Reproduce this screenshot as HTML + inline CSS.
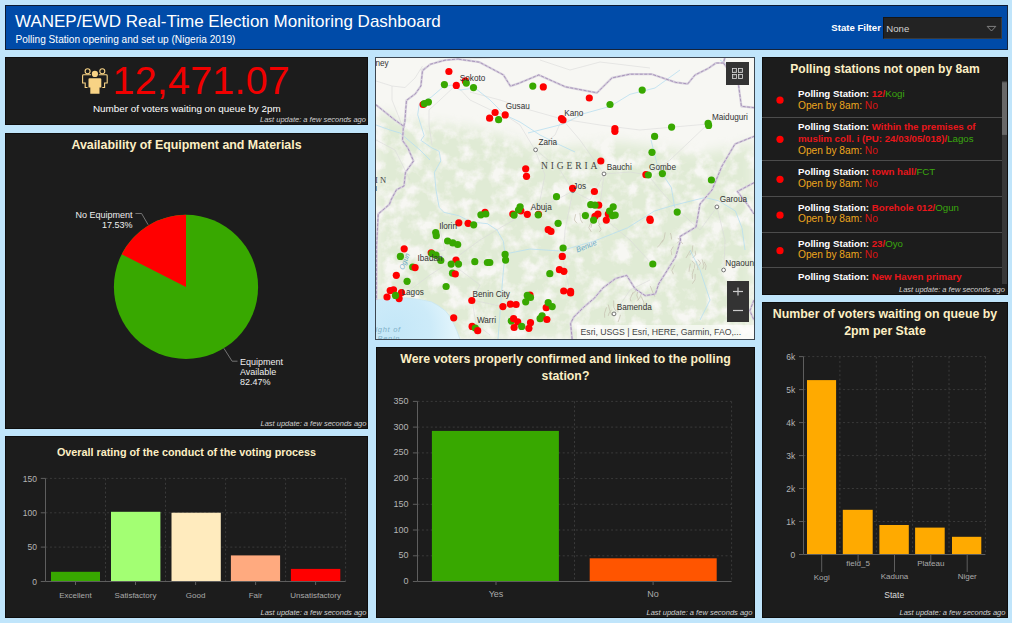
<!DOCTYPE html>
<html><head><meta charset="utf-8">
<style>
html,body{margin:0;padding:0;}
body{width:1012px;height:623px;background:#c0e5fb;position:relative;overflow:hidden;font-family:"Liberation Sans",sans-serif;}
.p{position:absolute;background:#1c1c1c;box-sizing:border-box;border:1px solid #0e0e0e;}
.t{position:absolute;white-space:nowrap;line-height:1;}
.ttl{color:#fdefc4;font-weight:bold;}
.lu{position:absolute;white-space:nowrap;font-style:italic;color:#d0d0d0;font-size:7.5px;line-height:1;}
.ax{color:#b4b4b4;font-size:8.5px;}
.ax8{font-size:8px;color:#aaa;}
.ml{color:#333;font-size:8.2px;}
svg{position:absolute;left:0;top:0;overflow:visible;}
</style></head><body>
<!-- header -->
<div style="position:absolute;left:5px;top:5px;width:1003px;height:45px;background:#004ba8;box-sizing:border-box;border:1px solid #15233a;border-top-color:#0b1a33;border-left-color:#0b1a33;"></div>
<div class="t" style="left:15px;top:13px;font-size:17px;color:#fff;">WANEP/EWD Real-Time Election Monitoring Dashboard</div>
<div class="t" style="left:15.5px;top:35px;font-size:10.1px;color:#fff;">Polling Station opening and set up (Nigeria 2019)</div>
<div class="t" style="left:831.3px;top:23.3px;font-size:9.6px;color:#fff;font-weight:bold;">State Filter</div>
<div style="position:absolute;left:883px;top:17px;width:119px;height:22px;background:#232323;box-sizing:border-box;border:1px solid #151515;border-right-color:#3a3a3a;border-bottom-color:#3a3a3a;"></div>
<svg width="1012" height="623"><path d="M987.2,26.4 L995.8,26.4 L991.5,31 Z" fill="none" stroke="#8a8a8a" stroke-width="0.9"/></svg>
<div class="t" style="left:886.3px;top:23.8px;font-size:9.6px;color:#d2d2d2;">None</div>

<!-- panels -->
<div class="p" style="left:5px;top:57px;width:363px;height:68px;"></div>
<div class="p" style="left:5px;top:133px;width:363px;height:296px;"></div>
<div class="p" style="left:5px;top:436px;width:363px;height:182px;"></div>
<div class="p" style="left:376px;top:347px;width:379px;height:271px;"></div>
<div class="p" style="left:762px;top:57px;width:246px;height:238px;"></div>
<div class="p" style="left:762px;top:302px;width:246px;height:316px;"></div>


<!-- P1 -->
<svg width="1012" height="623" style="left:0;top:0">
<g fill="#f8d385" stroke="none">
<circle cx="94.9" cy="73.9" r="3.1"/>
<path d="M89.5,78.2 L100.3,78.2 Q101.3,78.2 101.3,79.2 L101.3,87.6 L99.5,87.6 L99.5,93.8 L90.3,93.8 L90.3,87.6 L88.5,87.6 L88.5,79.2 Q88.5,78.2 89.5,78.2 Z"/>
</g>
<g fill="none" stroke="#f8d385" stroke-width="1.1">
<circle cx="87.6" cy="71.2" r="2.5"/>
<circle cx="102.3" cy="71.2" r="2.5"/>
<path d="M91,74.8 L83.5,74.8 Q82.6,74.8 82.6,75.7 L82.6,83 L85.2,83 L85.2,87.5 L87.5,87.5"/>
<path d="M98.8,74.8 L106.3,74.8 Q107.2,74.8 107.2,75.7 L107.2,83 L104.6,83 L104.6,87.5 L102.3,87.5"/>
</g>
</svg>
<div class="t" style="left:112.5px;top:60.8px;font-size:39.5px;letter-spacing:0.2px;color:#f00000;">12,471.07</div>
<div class="t" style="left:93px;top:104px;font-size:9.85px;color:#fff;">Number of voters waiting on queue by 2pm</div>
<div class="lu" style="left:260px;top:116px;">Last update: a few seconds ago</div>


<!-- P2 -->
<div class="t ttl" style="left:5px;width:363px;text-align:center;top:139px;font-size:12.4px;">Availability of Equipment and Materials</div>
<svg width="1012" height="623">
<circle cx="186" cy="286.9" r="72.1" fill="#38a800"/>
<path d="M186,286.9 L186,214.8 A72.1,72.1 0 0,0 121.7,254.3 Z" fill="#ff0000"/>
<polyline points="135.4,213.5 141.6,213.5 148.1,224.7" fill="none" stroke="#8a8a8a" stroke-width="0.8"/>
<polyline points="223.9,348.3 232.1,361.2 237.5,361.2" fill="none" stroke="#8a8a8a" stroke-width="0.8"/>
</svg>
<div class="t" style="left:32.6px;width:100px;text-align:right;top:209.5px;font-size:9px;color:#eee;line-height:10px;">No Equipment<br>17.53%</div>
<div class="t" style="left:240px;top:357px;font-size:9px;color:#eee;line-height:10.15px;">Equipment<br>Available<br>82.47%</div>
<div class="lu" style="left:260.5px;top:419.5px;">Last update: a few seconds ago</div>


<!-- P3 -->
<div class="t ttl" style="left:5px;width:363px;text-align:center;top:447px;font-size:10.8px;">Overall rating of the conduct of the voting process</div>
<svg width="1012" height="623">
<line x1="45.5" y1="478.4" x2="345.6" y2="478.4" stroke="#3a3a3a" stroke-width="1" stroke-dasharray="2,2.4"/>
<line x1="45.5" y1="512.8" x2="345.6" y2="512.8" stroke="#3a3a3a" stroke-width="1" stroke-dasharray="2,2.4"/>
<line x1="45.5" y1="547.1" x2="345.6" y2="547.1" stroke="#3a3a3a" stroke-width="1" stroke-dasharray="2,2.4"/>
<line x1="105.5" y1="478.4" x2="105.5" y2="581.5" stroke="#3a3a3a" stroke-width="1" stroke-dasharray="2,2.4"/>
<line x1="165.5" y1="478.4" x2="165.5" y2="581.5" stroke="#3a3a3a" stroke-width="1" stroke-dasharray="2,2.4"/>
<line x1="225.6" y1="478.4" x2="225.6" y2="581.5" stroke="#3a3a3a" stroke-width="1" stroke-dasharray="2,2.4"/>
<line x1="285.6" y1="478.4" x2="285.6" y2="581.5" stroke="#3a3a3a" stroke-width="1" stroke-dasharray="2,2.4"/>
<line x1="345.6" y1="478.4" x2="345.6" y2="581.5" stroke="#3a3a3a" stroke-width="1" stroke-dasharray="2,2.4"/>
<rect x="51" y="571.8" width="49.0" height="9.4" fill="#38a800"/>
<rect x="111" y="511.8" width="49.4" height="69.4" fill="#a3ff73"/>
<rect x="171.5" y="512.7" width="49.3" height="68.5" fill="#ffebbe"/>
<rect x="230.9" y="555.4" width="49.2" height="25.8" fill="#ffaa7f"/>
<rect x="290.9" y="568.9" width="49.4" height="12.3" fill="#ff0000"/>
<line x1="45.5" y1="478.4" x2="45.5" y2="581.5" stroke="#5e5e5e" stroke-width="1"/>
<line x1="45.5" y1="581.5" x2="345.6" y2="581.5" stroke="#5e5e5e" stroke-width="1"/>
<line x1="40.8" y1="478.4" x2="45.5" y2="478.4" stroke="#5e5e5e" stroke-width="1"/>
<line x1="40.8" y1="512.8" x2="45.5" y2="512.8" stroke="#5e5e5e" stroke-width="1"/>
<line x1="40.8" y1="547.1" x2="45.5" y2="547.1" stroke="#5e5e5e" stroke-width="1"/>
<line x1="40.8" y1="581.5" x2="45.5" y2="581.5" stroke="#5e5e5e" stroke-width="1"/>
<line x1="75.5" y1="581.5" x2="75.5" y2="585" stroke="#5e5e5e" stroke-width="1"/>
<line x1="135.5" y1="581.5" x2="135.5" y2="585" stroke="#5e5e5e" stroke-width="1"/>
<line x1="195.6" y1="581.5" x2="195.6" y2="585" stroke="#5e5e5e" stroke-width="1"/>
<line x1="255.6" y1="581.5" x2="255.6" y2="585" stroke="#5e5e5e" stroke-width="1"/>
<line x1="315.6" y1="581.5" x2="315.6" y2="585" stroke="#5e5e5e" stroke-width="1"/>
</svg>
<div class="t ax" style="left:0;width:37px;text-align:right;top:474.7px;">150</div>
<div class="t ax" style="left:0;width:37px;text-align:right;top:509.1px;">100</div>
<div class="t ax" style="left:0;width:37px;text-align:right;top:543.4px;">50</div>
<div class="t ax" style="left:0;width:37px;text-align:right;top:577.8px;">0</div>
<div class="t ax" style="left:35.5px;width:80px;text-align:center;top:591.6px;font-size:8px;color:#aaa;">Excellent</div>
<div class="t ax" style="left:95.5px;width:80px;text-align:center;top:591.6px;font-size:8px;color:#aaa;">Satisfactory</div>
<div class="t ax" style="left:155.6px;width:80px;text-align:center;top:591.6px;font-size:8px;color:#aaa;">Good</div>
<div class="t ax" style="left:215.6px;width:80px;text-align:center;top:591.6px;font-size:8px;color:#aaa;">Fair</div>
<div class="t ax" style="left:275.6px;width:80px;text-align:center;top:591.6px;font-size:8px;color:#aaa;">Unsatisfactory</div>
<div class="lu" style="left:260.5px;top:609px;">Last update: a few seconds ago</div>


<!-- P5 -->
<div class="t ttl" style="left:376px;width:379px;text-align:center;top:351.35px;font-size:12.3px;line-height:16.2px;">Were voters properly confirmed and linked to the polling<br>station?</div>
<svg width="1012" height="623">
<line x1="417.5" y1="555.8" x2="731.6" y2="555.8" stroke="#3a3a3a" stroke-width="1" stroke-dasharray="2,2.4"/>
<line x1="417.5" y1="530.0" x2="731.6" y2="530.0" stroke="#3a3a3a" stroke-width="1" stroke-dasharray="2,2.4"/>
<line x1="417.5" y1="504.3" x2="731.6" y2="504.3" stroke="#3a3a3a" stroke-width="1" stroke-dasharray="2,2.4"/>
<line x1="417.5" y1="478.6" x2="731.6" y2="478.6" stroke="#3a3a3a" stroke-width="1" stroke-dasharray="2,2.4"/>
<line x1="417.5" y1="452.9" x2="731.6" y2="452.9" stroke="#3a3a3a" stroke-width="1" stroke-dasharray="2,2.4"/>
<line x1="417.5" y1="427.1" x2="731.6" y2="427.1" stroke="#3a3a3a" stroke-width="1" stroke-dasharray="2,2.4"/>
<line x1="417.5" y1="401.4" x2="731.6" y2="401.4" stroke="#3a3a3a" stroke-width="1" stroke-dasharray="2,2.4"/>
<line x1="574.5" y1="401.4" x2="574.5" y2="581.5" stroke="#3a3a3a" stroke-width="1" stroke-dasharray="2,2.4"/>
<line x1="731.6" y1="401.4" x2="731.6" y2="581.5" stroke="#3a3a3a" stroke-width="1" stroke-dasharray="2,2.4"/>
<rect x="431.9" y="430.9" width="127" height="150.4" fill="#38a800"/>
<rect x="589.7" y="558.3" width="127" height="23" fill="#ff5500"/>
<line x1="417.5" y1="401.4" x2="417.5" y2="581.5" stroke="#5e5e5e" stroke-width="1"/>
<line x1="417.5" y1="581.5" x2="731.6" y2="581.5" stroke="#5e5e5e" stroke-width="1"/>
<line x1="412.9" y1="581.5" x2="417.5" y2="581.5" stroke="#5e5e5e" stroke-width="1"/>
<line x1="412.9" y1="555.8" x2="417.5" y2="555.8" stroke="#5e5e5e" stroke-width="1"/>
<line x1="412.9" y1="530.0" x2="417.5" y2="530.0" stroke="#5e5e5e" stroke-width="1"/>
<line x1="412.9" y1="504.3" x2="417.5" y2="504.3" stroke="#5e5e5e" stroke-width="1"/>
<line x1="412.9" y1="478.6" x2="417.5" y2="478.6" stroke="#5e5e5e" stroke-width="1"/>
<line x1="412.9" y1="452.9" x2="417.5" y2="452.9" stroke="#5e5e5e" stroke-width="1"/>
<line x1="412.9" y1="427.1" x2="417.5" y2="427.1" stroke="#5e5e5e" stroke-width="1"/>
<line x1="412.9" y1="401.4" x2="417.5" y2="401.4" stroke="#5e5e5e" stroke-width="1"/>
<line x1="496.0" y1="581.5" x2="496.0" y2="585" stroke="#5e5e5e" stroke-width="1"/>
<line x1="653.1" y1="581.5" x2="653.1" y2="585" stroke="#5e5e5e" stroke-width="1"/>
</svg>
<div class="t ax" style="left:368px;width:40.5px;text-align:right;top:577.0px;font-size:9px;">0</div>
<div class="t ax" style="left:368px;width:40.5px;text-align:right;top:551.3px;font-size:9px;">50</div>
<div class="t ax" style="left:368px;width:40.5px;text-align:right;top:525.5px;font-size:9px;">100</div>
<div class="t ax" style="left:368px;width:40.5px;text-align:right;top:499.8px;font-size:9px;">150</div>
<div class="t ax" style="left:368px;width:40.5px;text-align:right;top:474.1px;font-size:9px;">200</div>
<div class="t ax" style="left:368px;width:40.5px;text-align:right;top:448.4px;font-size:9px;">250</div>
<div class="t ax" style="left:368px;width:40.5px;text-align:right;top:422.6px;font-size:9px;">300</div>
<div class="t ax" style="left:368px;width:40.5px;text-align:right;top:396.9px;font-size:9px;">350</div>
<div class="t ax" style="left:456.0px;width:80px;text-align:center;top:590px;font-size:9px;color:#aaa;">Yes</div>
<div class="t ax" style="left:613.1px;width:80px;text-align:center;top:590px;font-size:9px;color:#aaa;">No</div>
<div class="lu" style="left:646.5px;top:609px;">Last update: a few seconds ago</div>


<!-- P6 -->
<div class="t ttl" style="left:762px;width:246px;text-align:center;top:63px;font-size:12.1px;">Polling stations not open by 8am</div>
<div style="position:absolute;left:762px;top:81px;width:240px;height:203px;overflow:hidden;">
<div class="t" style="left:36px;top:7.79px;font-size:9.7px;"><b style="color:#fff">Polling Station: </b><b style="color:#e8161b">12/</b><span style="color:#3aa70e">Kogi</span></div>
<div class="t" style="left:36px;top:19.69px;font-size:9.7px;"><span style="color:#eda61e;font-size:10.2px">Open by 8am: </span><span style="color:#d81414;font-size:10.2px">No</span></div>
<div class="t" style="left:36px;top:41.29px;font-size:9.7px;"><b style="color:#fff">Polling Station: </b><b style="color:#e8161b">Within the premises of</b></div>
<div class="t" style="left:36px;top:52.99px;font-size:9.7px;"><b style="color:#e8161b">muslim coll. i (PU: 24/03/05/018)/</b><span style="color:#3aa70e">Lagos</span></div>
<div class="t" style="left:36px;top:64.89px;font-size:9.7px;"><span style="color:#eda61e;font-size:10.2px">Open by 8am: </span><span style="color:#d81414;font-size:10.2px">No</span></div>
<div class="t" style="left:36px;top:86.39px;font-size:9.7px;"><b style="color:#fff">Polling Station: </b><b style="color:#e8161b">town hall/</b><span style="color:#3aa70e">FCT</span></div>
<div class="t" style="left:36px;top:98.09px;font-size:9.7px;"><span style="color:#eda61e;font-size:10.2px">Open by 8am: </span><span style="color:#d81414;font-size:10.2px">No</span></div>
<div class="t" style="left:36px;top:121.79px;font-size:9.7px;"><b style="color:#fff">Polling Station: </b><b style="color:#e8161b">Borehole 012/</b><span style="color:#3aa70e">Ogun</span></div>
<div class="t" style="left:36px;top:133.49px;font-size:9.7px;"><span style="color:#eda61e;font-size:10.2px">Open by 8am: </span><span style="color:#d81414;font-size:10.2px">No</span></div>
<div class="t" style="left:36px;top:157.59px;font-size:9.7px;"><b style="color:#fff">Polling Station: </b><b style="color:#e8161b">23/</b><span style="color:#3aa70e">Oyo</span></div>
<div class="t" style="left:36px;top:169.19px;font-size:9.7px;"><span style="color:#eda61e;font-size:10.2px">Open by 8am: </span><span style="color:#d81414;font-size:10.2px">No</span></div>
<div class="t" style="left:36px;top:191.09px;font-size:9.7px;"><b style="color:#fff">Polling Station: </b><b style="color:#e8161b">New Haven primary</b></div>
</div>
<svg width="1012" height="623">
<line x1="762" y1="117.5" x2="1002" y2="117.5" stroke="#4c4c4c" stroke-width="1"/>
<line x1="762" y1="160.5" x2="1002" y2="160.5" stroke="#4c4c4c" stroke-width="1"/>
<line x1="762" y1="196.5" x2="1002" y2="196.5" stroke="#4c4c4c" stroke-width="1"/>
<line x1="762" y1="232.5" x2="1002" y2="232.5" stroke="#4c4c4c" stroke-width="1"/>
<line x1="762" y1="267.5" x2="1002" y2="267.5" stroke="#4c4c4c" stroke-width="1"/>
<circle cx="780" cy="100.2" r="3.6" fill="#ff0000"/>
<circle cx="780" cy="139.3" r="3.6" fill="#ff0000"/>
<circle cx="780" cy="179.3" r="3.6" fill="#ff0000"/>
<circle cx="780" cy="215.2" r="3.6" fill="#ff0000"/>
<circle cx="780" cy="250.7" r="3.6" fill="#ff0000"/>
<rect x="1002" y="81" width="5" height="203" fill="#383838"/>
<rect x="1002" y="82.3" width="5" height="52.6" fill="#686868"/>
<rect x="898" y="284" width="109" height="10" fill="#1c1c1c"/>
</svg>
<div class="lu" style="left:899px;top:285.5px;">Last update: a few seconds ago</div>


<!-- P7 -->
<div class="t ttl" style="left:762px;width:246px;text-align:center;top:305.6px;font-size:12.35px;line-height:17.6px;">Number of voters waiting on queue by<br>2pm per State</div>
<svg width="1012" height="623">
<line x1="803.5" y1="521.5" x2="985.4" y2="521.5" stroke="#3a3a3a" stroke-width="1" stroke-dasharray="2,2.4"/>
<line x1="803.5" y1="488.5" x2="985.4" y2="488.5" stroke="#3a3a3a" stroke-width="1" stroke-dasharray="2,2.4"/>
<line x1="803.5" y1="455.6" x2="985.4" y2="455.6" stroke="#3a3a3a" stroke-width="1" stroke-dasharray="2,2.4"/>
<line x1="803.5" y1="422.6" x2="985.4" y2="422.6" stroke="#3a3a3a" stroke-width="1" stroke-dasharray="2,2.4"/>
<line x1="803.5" y1="389.6" x2="985.4" y2="389.6" stroke="#3a3a3a" stroke-width="1" stroke-dasharray="2,2.4"/>
<line x1="803.5" y1="356.6" x2="985.4" y2="356.6" stroke="#3a3a3a" stroke-width="1" stroke-dasharray="2,2.4"/>
<line x1="839.9" y1="356.6" x2="839.9" y2="554.5" stroke="#3a3a3a" stroke-width="1" stroke-dasharray="2,2.4"/>
<line x1="876.3" y1="356.6" x2="876.3" y2="554.5" stroke="#3a3a3a" stroke-width="1" stroke-dasharray="2,2.4"/>
<line x1="912.6" y1="356.6" x2="912.6" y2="554.5" stroke="#3a3a3a" stroke-width="1" stroke-dasharray="2,2.4"/>
<line x1="949.0" y1="356.6" x2="949.0" y2="554.5" stroke="#3a3a3a" stroke-width="1" stroke-dasharray="2,2.4"/>
<line x1="985.4" y1="356.6" x2="985.4" y2="554.5" stroke="#3a3a3a" stroke-width="1" stroke-dasharray="2,2.4"/>
<rect x="807" y="380.1" width="29.1" height="174.2" fill="#ffaa00"/>
<rect x="842.8" y="509.8" width="29.9" height="44.5" fill="#ffaa00"/>
<rect x="879.4" y="525" width="29.4" height="29.3" fill="#ffaa00"/>
<rect x="915.1" y="527.6" width="29.6" height="26.7" fill="#ffaa00"/>
<rect x="952" y="536.8" width="29.3" height="17.5" fill="#ffaa00"/>
<line x1="803.5" y1="356.6" x2="803.5" y2="554.5" stroke="#5e5e5e" stroke-width="1"/>
<line x1="803.5" y1="554.5" x2="985.4" y2="554.5" stroke="#5e5e5e" stroke-width="1"/>
<line x1="799" y1="554.5" x2="803.5" y2="554.5" stroke="#5e5e5e" stroke-width="1"/>
<line x1="799" y1="521.5" x2="803.5" y2="521.5" stroke="#5e5e5e" stroke-width="1"/>
<line x1="799" y1="488.5" x2="803.5" y2="488.5" stroke="#5e5e5e" stroke-width="1"/>
<line x1="799" y1="455.6" x2="803.5" y2="455.6" stroke="#5e5e5e" stroke-width="1"/>
<line x1="799" y1="422.6" x2="803.5" y2="422.6" stroke="#5e5e5e" stroke-width="1"/>
<line x1="799" y1="389.6" x2="803.5" y2="389.6" stroke="#5e5e5e" stroke-width="1"/>
<line x1="799" y1="356.6" x2="803.5" y2="356.6" stroke="#5e5e5e" stroke-width="1"/>
<line x1="821.7" y1="554.5" x2="821.7" y2="572" stroke="#5e5e5e" stroke-width="1"/>
<line x1="858.1" y1="554.5" x2="858.1" y2="562" stroke="#5e5e5e" stroke-width="1"/>
<line x1="894.5" y1="554.5" x2="894.5" y2="572" stroke="#5e5e5e" stroke-width="1"/>
<line x1="930.8" y1="554.5" x2="930.8" y2="562" stroke="#5e5e5e" stroke-width="1"/>
<line x1="967.2" y1="554.5" x2="967.2" y2="572" stroke="#5e5e5e" stroke-width="1"/>
</svg>
<div class="t ax" style="left:760px;width:35.3px;text-align:right;top:551.2px;font-size:8.5px;">0</div>
<div class="t ax" style="left:760px;width:35.3px;text-align:right;top:518.2px;font-size:8.5px;">1k</div>
<div class="t ax" style="left:760px;width:35.3px;text-align:right;top:485.2px;font-size:8.5px;">2k</div>
<div class="t ax" style="left:760px;width:35.3px;text-align:right;top:452.2px;font-size:8.5px;">3k</div>
<div class="t ax" style="left:760px;width:35.3px;text-align:right;top:419.3px;font-size:8.5px;">4k</div>
<div class="t ax" style="left:760px;width:35.3px;text-align:right;top:386.3px;font-size:8.5px;">5k</div>
<div class="t ax" style="left:760px;width:35.3px;text-align:right;top:353.3px;font-size:8.5px;">6k</div>
<div class="t ax" style="left:781.7px;width:80px;text-align:center;top:574.2px;font-size:8px;color:#aaa;">Kogi</div>
<div class="t ax" style="left:818.1px;width:80px;text-align:center;top:560.1px;font-size:8px;color:#aaa;">field_5</div>
<div class="t ax" style="left:854.5px;width:80px;text-align:center;top:573.2px;font-size:8px;color:#aaa;">Kaduna</div>
<div class="t ax" style="left:890.8px;width:80px;text-align:center;top:559.6px;font-size:8px;color:#aaa;">Plateau</div>
<div class="t ax" style="left:927.2px;width:80px;text-align:center;top:573.2px;font-size:8px;color:#aaa;">Niger</div>
<div class="t" style="left:884.3px;top:590.5px;font-size:8.5px;color:#ddd;">State</div>
<div class="lu" style="left:899.5px;top:609.2px;">Last update: a few seconds ago</div>

<!-- map -->
<!--MAPSTART--><div style="position:absolute;left:376px;top:58px;width:378px;height:281px;overflow:hidden;"><div style="position:absolute;left:-376px;top:-58px;width:1012px;height:623px;">
<svg width="1012" height="623" style="left:0;top:0"><defs><clipPath id="mc"><rect x="376" y="58" width="378" height="281"/></clipPath><filter id="bl" x="-20%" y="-20%" width="140%" height="140%"><feGaussianBlur stdDeviation="2.5"/></filter></defs><g clip-path="url(#mc)">
<rect x="376" y="58" width="378" height="281" fill="#f7f7f3"/>
<filter id="veg" x="0" y="0" width="100%" height="100%" color-interpolation-filters="sRGB"><feTurbulence type="fractalNoise" baseFrequency="0.065" numOctaves="4" seed="5" result="n"/><feColorMatrix in="n" type="matrix" values="0 0 0 0 0.88  0 0 0 0 0.92  0 0 0 0 0.835  3.4 0 0 0 -0.95" result="c"/><feComposite in="c" in2="SourceGraphic" operator="in"/></filter>
<filter id="bl2"><feGaussianBlur stdDeviation="6"/></filter><mask id="vm"><rect x="376" y="58" width="378" height="281" fill="#000"/><path d="M376,112 L400,118 L430,123 L470,128 L505,136 L540,150 L580,146 L620,142 L660,148 L700,154 L740,146 L754,142 L754,339 L376,339 Z" fill="#fff" filter="url(#bl2)"/></mask>
<g mask="url(#vm)"><rect x="376" y="58" width="378" height="281" fill="#fff" filter="url(#veg)"/></g>
<radialGradient id="og" gradientUnits="userSpaceOnUse" cx="395" cy="330" r="60"><stop offset="0" stop-color="#c4e7f8"/><stop offset="0.6" stop-color="#cdebf9"/><stop offset="1" stop-color="#e2f5fc"/></radialGradient>
<path d="M376,299.8 L390,298.6 L405.6,297.8 L420,299.5 L431.3,301.8 L438,305.5 L445.2,310.7 L449.5,316 L453.1,322.5 L456.5,330 L460,339.3 L376,339.3 Z" fill="url(#og)"/>
<path d="M376,299.8 L390,298.6 L405.6,297.8 L420,299.5 L431.3,301.8 L438,305.5 L445.2,310.7 L449.5,316 L453.1,322.5 L456.5,330 L460,339.3" fill="none" stroke="#c9e6f0" stroke-width="0.8"/>
<path d="M670.4,233.0 l0.9,3.3 l0.2,3.1" fill="none" stroke="#c9c5b5" stroke-width="0.8"/>
<path d="M662.7,240.1 l-2.8,4.7 l-2.6,2.3" fill="none" stroke="#c9c5b5" stroke-width="0.8"/>
<path d="M673.3,246.5 l-2.3,3.9 l0.8,4.8" fill="none" stroke="#c9c5b5" stroke-width="0.8"/>
<path d="M677.7,237.9 l2.9,3.2 l2.2,2.9" fill="none" stroke="#c9c5b5" stroke-width="0.8"/>
<path d="M665.2,232.4 l-1.1,6.3 l-1.9,3.7" fill="none" stroke="#c9c5b5" stroke-width="0.8"/>
<path d="M679.5,237.4 l0.3,3.3 l-2.6,2.6" fill="none" stroke="#c9c5b5" stroke-width="0.8"/>
<path d="M690.4,263.6 l-1.1,5.3 l-0.3,2.9" fill="none" stroke="#c9c5b5" stroke-width="0.8"/>
<path d="M693.8,269.0 l-1.5,5.3 l0.2,4.6" fill="none" stroke="#c9c5b5" stroke-width="0.8"/>
<path d="M691.9,260.8 l2.9,3.5 l-0.5,4.3" fill="none" stroke="#c9c5b5" stroke-width="0.8"/>
<path d="M674.6,264.8 l-2.8,5.7 l1.6,3.7" fill="none" stroke="#c9c5b5" stroke-width="0.8"/>
<path d="M696.3,261.3 l1.2,5.4 l0.5,3.4" fill="none" stroke="#c9c5b5" stroke-width="0.8"/>
<path d="M695.2,273.9 l-0.2,5.7 l-2.6,4.1" fill="none" stroke="#c9c5b5" stroke-width="0.8"/>
<path d="M704.2,261.8 l1.9,4.1 l-0.7,4.0" fill="none" stroke="#c9c5b5" stroke-width="0.8"/>
<path d="M690.5,250.2 l-2.0,3.5 l-2.6,4.3" fill="none" stroke="#c9c5b5" stroke-width="0.8"/>
<path d="M692.8,245.4 l-0.7,6.5 l-2.5,3.3" fill="none" stroke="#c9c5b5" stroke-width="0.8"/>
<path d="M702.1,259.4 l1.9,6.5 l-1.3,3.2" fill="none" stroke="#c9c5b5" stroke-width="0.8"/>
<path d="M697.9,259.5 l2.7,3.6 l-1.9,2.7" fill="none" stroke="#c9c5b5" stroke-width="0.8"/>
<path d="M695.1,250.7 l0.5,4.1 l-3.0,3.3" fill="none" stroke="#c9c5b5" stroke-width="0.8"/>
<path d="M641.1,296.3 l2.7,5.8 l0.1,3.9" fill="none" stroke="#c9c5b5" stroke-width="0.8"/>
<path d="M650.3,286.1 l2.4,6.1 l2.2,4.4" fill="none" stroke="#c9c5b5" stroke-width="0.8"/>
<path d="M641.8,293.0 l-2.4,5.5 l-2.6,2.2" fill="none" stroke="#c9c5b5" stroke-width="0.8"/>
<path d="M636.3,288.2 l-1.0,3.2 l-3.0,2.5" fill="none" stroke="#c9c5b5" stroke-width="0.8"/>
<path d="M633.0,292.3 l-2.8,6.5 l0.7,2.4" fill="none" stroke="#c9c5b5" stroke-width="0.8"/>
<path d="M637.6,291.9 l-0.8,3.5 l2.1,5.0" fill="none" stroke="#c9c5b5" stroke-width="0.8"/>
<path d="M611.6,309.7 l-2.5,3.4 l-0.9,2.8" fill="none" stroke="#c9c5b5" stroke-width="0.8"/>
<path d="M620.7,303.2 l-2.9,6.8 l0.2,2.4" fill="none" stroke="#c9c5b5" stroke-width="0.8"/>
<path d="M613.6,300.5 l0.2,6.9 l2.2,4.1" fill="none" stroke="#c9c5b5" stroke-width="0.8"/>
<path d="M606.5,307.3 l-2.0,6.1 l0.2,4.3" fill="none" stroke="#c9c5b5" stroke-width="0.8"/>
<path d="M608.2,304.5 l1.9,6.9 l2.1,4.4" fill="none" stroke="#c9c5b5" stroke-width="0.8"/>
<path d="M620.5,314.8 l-1.6,5.1 l-0.9,2.1" fill="none" stroke="#c9c5b5" stroke-width="0.8"/>
<path d="M575.7,214.2 l-1.4,5.8 l2.7,3.3" fill="none" stroke="#c9c5b5" stroke-width="0.8"/>
<path d="M598.4,224.8 l2.7,4.5 l-1.7,2.7" fill="none" stroke="#c9c5b5" stroke-width="0.8"/>
<path d="M579.9,213.1 l0.7,6.6 l2.0,3.4" fill="none" stroke="#c9c5b5" stroke-width="0.8"/>
<path d="M591.3,222.0 l-2.5,5.6 l2.5,4.3" fill="none" stroke="#c9c5b5" stroke-width="0.8"/>
<path d="M593.8,217.2 l-1.9,6.2 l-1.0,4.4" fill="none" stroke="#c9c5b5" stroke-width="0.8"/>
<path d="M599.3,215.9 l-0.6,6.8 l1.3,2.5" fill="none" stroke="#c9c5b5" stroke-width="0.8"/>
<path d="M376,81 L392,86 L405,87.5 L415,78 L422.5,66" fill="none" stroke="#dadada" stroke-width="0.6"/>
<path d="M392,86 L392,100 L400,120 L405,135" fill="none" stroke="#dadada" stroke-width="0.6"/>
<path d="M429,110 L440,100 L456,85" fill="none" stroke="#dadada" stroke-width="0.6"/>
<path d="M429,110 L429,125 L432,145" fill="none" stroke="#dadada" stroke-width="0.6"/>
<path d="M470,92 L500,100 L530,110 L562,119 L600,125 L640,130 L708,124" fill="none" stroke="#dadada" stroke-width="0.6"/>
<path d="M456,85 L470,100 L495,112 L505,115 L520,125 L535,150 L545,175 L540,200 L530,211" fill="none" stroke="#dadada" stroke-width="0.6"/>
<path d="M562,119 L555,135 L536,150" fill="none" stroke="#dadada" stroke-width="0.6"/>
<path d="M562,119 L580,140 L604,174 L630,172 L648,175 L670,160 L708,124" fill="none" stroke="#dadada" stroke-width="0.6"/>
<path d="M536,150 L560,170 L573,191 L590,200 L604,174" fill="none" stroke="#dadada" stroke-width="0.6"/>
<path d="M530,211 L505,225 L480,240 L450,262 L430,275 L410,290 L400,298" fill="none" stroke="#dadada" stroke-width="0.6"/>
<path d="M440,230 L445,250 L432,253" fill="none" stroke="#dadada" stroke-width="0.6"/>
<path d="M432,253 L460,270 L480,285 L472,300 L500,306" fill="none" stroke="#dadada" stroke-width="0.6"/>
<path d="M530,211 L556,200 L573,191" fill="none" stroke="#dadada" stroke-width="0.6"/>
<path d="M472,300 L476,324 L490,335" fill="none" stroke="#dadada" stroke-width="0.6"/>
<path d="M573,191 L565,230 L563,260 L570,292" fill="none" stroke="#dadada" stroke-width="0.6"/>
<path d="M648,175 L660,190 L678,210 L700,230 L717,207" fill="none" stroke="#dadada" stroke-width="0.6"/>
<path d="M604,174 L600,205 L606,220 L630,240 L652,264" fill="none" stroke="#dadada" stroke-width="0.6"/>
<path d="M376,140 L395,150 L410,180" fill="none" stroke="#dadada" stroke-width="0.6"/>
<path d="M420,70 L440,60 L490,58" fill="none" stroke="#dadada" stroke-width="0.6"/>
<path d="M540,60 L570,70 L600,62 L650,68" fill="none" stroke="#dadada" stroke-width="0.6"/>
<path d="M717,207 L725,240 L724,270" fill="none" stroke="#dadada" stroke-width="0.6"/>
<path d="M614,314 L630,290 L650,280" fill="none" stroke="#dadada" stroke-width="0.6"/>
<path d="M475,88 L460,90 L451.4,85.1 L443.4,86.7 L431.3,97.1 L419.3,103.5 L417.7,114.8 L424.1,135.6 L420.9,140.4 L432,148 L439.2,151.4 L440.8,161 L434.4,172.3 L436,190 L439.2,207.6 L444,212.4 L458.5,215.6 L471.3,222 L487.4,223.7 L497,230 L503.4,241.3 L505,254 L503,275 L501,300 L498,339" fill="none" stroke="#b7def0" stroke-width="0.8"/>
<path d="M505,254 L530,249 L560,251 L593.7,241.3 L627.5,227.8 L654.5,211 L671,206 L705,197.5 L718.6,200.8 L735.4,211 L742,228 L745,250" fill="none" stroke="#b7def0" stroke-width="0.8"/>
<path d="M475,88 L490,100 L505,115 L520,122 L540,135 L560,145 L575,152" fill="none" stroke="#b7def0" stroke-width="0.8"/>
<path d="M528,133 L562.7,124.2 L583.6,113.7 L610.4,106.3 L630,94.3 L655,88 L680,70" fill="none" stroke="#b7def0" stroke-width="0.8"/>
<path d="M651,140 L657.8,167 L671.3,187.4 L674.7,207.6" fill="none" stroke="#b7def0" stroke-width="0.8"/>
<path d="M376,125 L390,130 L400,133 L420,150 L430,160" fill="none" stroke="#b7def0" stroke-width="0.8"/>
<path d="M720,60 L735,70" fill="none" stroke="#b7def0" stroke-width="0.8"/>
<path d="M690,250 L700,270 L710,300 L700,320" fill="none" stroke="#b7def0" stroke-width="0.8"/>
<path d="M376,104.8 L394.4,119.7 L404.9,127.1" fill="none" stroke="#d6cfdd" stroke-width="2.2" stroke-linejoin="round"/>
<path d="M376,104.8 L394.4,119.7 L404.9,127.1" fill="none" stroke="#a996bb" stroke-width="1" stroke-dasharray="3,1.5" stroke-linejoin="round"/>
<path d="M459.4,58.9 L445,60.2 L430.5,64.2 L422.5,70.6 L420.9,85.9 L415.3,93.9 L406.5,100.3 L405.7,110 L404.9,121.2 L403.3,128.4 L402.5,140.4 L408.1,148.4 L413.5,161 L405.5,172.3 L404,186 L396.5,189.7 L391,200 L389.4,204.4 L378.2,214 L376.6,245 L376.5,300" fill="none" stroke="#d6cfdd" stroke-width="2.2" stroke-linejoin="round"/>
<path d="M459.4,58.9 L445,60.2 L430.5,64.2 L422.5,70.6 L420.9,85.9 L415.3,93.9 L406.5,100.3 L405.7,110 L404.9,121.2 L403.3,128.4 L402.5,140.4 L408.1,148.4 L413.5,161 L405.5,172.3 L404,186 L396.5,189.7 L391,200 L389.4,204.4 L378.2,214 L376.6,245 L376.5,300" fill="none" stroke="#a996bb" stroke-width="1" stroke-dasharray="3,1.5" stroke-linejoin="round"/>
<path d="M458.6,59.2 L479.5,62.2 L503.4,74.9 L510.4,86.1 L519.4,83.1 L538.8,74.9 L552.2,80.9 L565.7,86.9 L597,92.8 L612,77.9 L630,74.2 L651.9,74.2 L675.7,82.4 L687.7,83.9 L695.1,74.9 L708.6,68.2 L716,63 L723.5,63 L725,57" fill="none" stroke="#d6cfdd" stroke-width="2.2" stroke-linejoin="round"/>
<path d="M458.6,59.2 L479.5,62.2 L503.4,74.9 L510.4,86.1 L519.4,83.1 L538.8,74.9 L552.2,80.9 L565.7,86.9 L597,92.8 L612,77.9 L630,74.2 L651.9,74.2 L675.7,82.4 L687.7,83.9 L695.1,74.9 L708.6,68.2 L716,63 L723.5,63 L725,57" fill="none" stroke="#a996bb" stroke-width="1" stroke-dasharray="3,1.5" stroke-linejoin="round"/>
<path d="M723.5,63 L738.4,83.9 L741.4,106.3 L754,107.7" fill="none" stroke="#d6cfdd" stroke-width="2.2" stroke-linejoin="round"/>
<path d="M723.5,63 L738.4,83.9 L741.4,106.3 L754,107.7" fill="none" stroke="#a996bb" stroke-width="1" stroke-dasharray="3,1.5" stroke-linejoin="round"/>
<path d="M755,136 L735,144 L722,166 L712,190 L700,204 L696,227 L680,236.5 L680.6,240 L675.6,256.9 L667.2,270.4 L658.7,283.8 L655.4,294 L645.2,295.6 L635.1,288.9 L626.7,275.4 L615.6,278.5 L602.7,288.2 L594.7,297.8 L583.5,307.4 L573.8,317 L570.6,323.5 L572.2,340" fill="none" stroke="#d6cfdd" stroke-width="2.2" stroke-linejoin="round"/>
<path d="M755,136 L735,144 L722,166 L712,190 L700,204 L696,227 L680,236.5 L680.6,240 L675.6,256.9 L667.2,270.4 L658.7,283.8 L655.4,294 L645.2,295.6 L635.1,288.9 L626.7,275.4 L615.6,278.5 L602.7,288.2 L594.7,297.8 L583.5,307.4 L573.8,317 L570.6,323.5 L572.2,340" fill="none" stroke="#a996bb" stroke-width="1" stroke-dasharray="3,1.5" stroke-linejoin="round"/>
<path d="M754,182.7 L737.4,191.5 L748.6,206 L754,214" fill="none" stroke="#d6cfdd" stroke-width="2.2" stroke-linejoin="round"/>
<path d="M754,182.7 L737.4,191.5 L748.6,206 L754,214" fill="none" stroke="#a996bb" stroke-width="1" stroke-dasharray="3,1.5" stroke-linejoin="round"/>
<path d="M754,300 L749.8,310.8 L754,320" fill="none" stroke="#d6cfdd" stroke-width="2.2" stroke-linejoin="round"/>
<path d="M754,300 L749.8,310.8 L754,320" fill="none" stroke="#a996bb" stroke-width="1" stroke-dasharray="3,1.5" stroke-linejoin="round"/>
<circle cx="535.6" cy="149.8" r="1.9" fill="#fff" stroke="#555" stroke-width="0.8"/>
<circle cx="604" cy="173.9" r="1.9" fill="#fff" stroke="#555" stroke-width="0.8"/>
<circle cx="572.8" cy="190.7" r="1.9" fill="#fff" stroke="#555" stroke-width="0.8"/>
<circle cx="716.9" cy="206.9" r="1.9" fill="#fff" stroke="#555" stroke-width="0.8"/>
<circle cx="723.6" cy="270" r="1.9" fill="#fff" stroke="#555" stroke-width="0.8"/>
<circle cx="614" cy="313.9" r="1.9" fill="#fff" stroke="#555" stroke-width="0.8"/>
<circle cx="448.9" cy="71.5" r="3.6" fill="#ff0000"/>
<circle cx="444.4" cy="84.6" r="3.6" fill="#38a800"/>
<circle cx="456.3" cy="85.4" r="3.6" fill="#ff0000"/>
<circle cx="465.3" cy="80.9" r="3.6" fill="#ff0000"/>
<circle cx="466.3" cy="83.1" r="3.6" fill="#38a800"/>
<circle cx="473.5" cy="87.6" r="3.6" fill="#38a800"/>
<circle cx="423.1" cy="104.5" r="3.6" fill="#ff0000"/>
<circle cx="424.3" cy="103.6" r="3.6" fill="#38a800"/>
<circle cx="428.4" cy="102.1" r="3.6" fill="#38a800"/>
<circle cx="495.1" cy="112.5" r="3.6" fill="#ff0000"/>
<circle cx="489.6" cy="118.2" r="3.6" fill="#ff0000"/>
<circle cx="498.6" cy="119.7" r="3.6" fill="#38a800"/>
<circle cx="532.8" cy="86.1" r="3.6" fill="#38a800"/>
<circle cx="543.3" cy="86.9" r="3.6" fill="#ff0000"/>
<circle cx="589.3" cy="98.0" r="3.6" fill="#ff0000"/>
<circle cx="610" cy="104.5" r="3.6" fill="#38a800"/>
<circle cx="505.2" cy="114.9" r="3.6" fill="#ff0000"/>
<circle cx="561.5" cy="118.5" r="3.6" fill="#ff0000"/>
<circle cx="563" cy="120" r="3.6" fill="#ff0000"/>
<circle cx="614.9" cy="128.6" r="3.6" fill="#ff0000"/>
<circle cx="614.9" cy="131.3" r="3.6" fill="#ff0000"/>
<circle cx="642.2" cy="90.1" r="3.6" fill="#38a800"/>
<circle cx="671.6" cy="127.1" r="3.6" fill="#38a800"/>
<circle cx="654.6" cy="136.4" r="3.6" fill="#38a800"/>
<circle cx="708.1" cy="123.4" r="3.6" fill="#38a800"/>
<circle cx="708.6" cy="125.4" r="3.6" fill="#38a800"/>
<circle cx="652" cy="152.3" r="3.6" fill="#38a800"/>
<circle cx="485" cy="212.4" r="3.6" fill="#ff0000"/>
<circle cx="480.9" cy="214.8" r="3.6" fill="#38a800"/>
<circle cx="485.8" cy="214" r="3.6" fill="#38a800"/>
<circle cx="458.8" cy="222.8" r="3.6" fill="#ff0000"/>
<circle cx="468.1" cy="223.3" r="3.6" fill="#ff0000"/>
<circle cx="473.7" cy="224.8" r="3.6" fill="#38a800"/>
<circle cx="435.7" cy="232.5" r="3.6" fill="#38a800"/>
<circle cx="436.3" cy="235.7" r="3.6" fill="#38a800"/>
<circle cx="447.6" cy="241" r="3.6" fill="#38a800"/>
<circle cx="452.8" cy="242.9" r="3.6" fill="#38a800"/>
<circle cx="457.7" cy="244.5" r="3.6" fill="#38a800"/>
<circle cx="525.7" cy="168.8" r="3.6" fill="#ff0000"/>
<circle cx="526.5" cy="176.3" r="3.6" fill="#ff0000"/>
<circle cx="600.8" cy="161" r="3.6" fill="#ff0000"/>
<circle cx="572.6" cy="188.3" r="3.6" fill="#ff0000"/>
<circle cx="594.4" cy="191.5" r="3.6" fill="#ff0000"/>
<circle cx="556.5" cy="196.7" r="3.6" fill="#38a800"/>
<circle cx="512.8" cy="214" r="3.6" fill="#ff0000"/>
<circle cx="520.9" cy="210.8" r="3.6" fill="#ff0000"/>
<circle cx="520.1" cy="206.8" r="3.6" fill="#38a800"/>
<circle cx="518.5" cy="210" r="3.6" fill="#38a800"/>
<circle cx="514.1" cy="215.1" r="3.6" fill="#38a800"/>
<circle cx="527.3" cy="214.3" r="3.6" fill="#ff0000"/>
<circle cx="538.5" cy="214.3" r="3.6" fill="#ff0000"/>
<circle cx="538.2" cy="214.8" r="3.6" fill="#38a800"/>
<circle cx="558.1" cy="223.3" r="3.6" fill="#38a800"/>
<circle cx="548.2" cy="229.7" r="3.6" fill="#ff0000"/>
<circle cx="551" cy="231.4" r="3.6" fill="#ff0000"/>
<circle cx="598.7" cy="205.2" r="3.6" fill="#ff0000"/>
<circle cx="590.7" cy="204.7" r="3.6" fill="#38a800"/>
<circle cx="595" cy="205.2" r="3.6" fill="#38a800"/>
<circle cx="585.4" cy="215.6" r="3.6" fill="#38a800"/>
<circle cx="595" cy="216.4" r="3.6" fill="#ff0000"/>
<circle cx="597.9" cy="214" r="3.6" fill="#ff0000"/>
<circle cx="593.6" cy="220.1" r="3.6" fill="#38a800"/>
<circle cx="606.3" cy="220.1" r="3.6" fill="#ff0000"/>
<circle cx="608.3" cy="214" r="3.6" fill="#ff0000"/>
<circle cx="613.2" cy="206.8" r="3.6" fill="#38a800"/>
<circle cx="609.6" cy="211.1" r="3.6" fill="#38a800"/>
<circle cx="612.4" cy="215.6" r="3.6" fill="#38a800"/>
<circle cx="615.2" cy="215.1" r="3.6" fill="#38a800"/>
<circle cx="645.9" cy="174.7" r="3.6" fill="#ff0000"/>
<circle cx="648.3" cy="175" r="3.6" fill="#38a800"/>
<circle cx="662.4" cy="173.6" r="3.6" fill="#38a800"/>
<circle cx="711.4" cy="180" r="3.6" fill="#38a800"/>
<circle cx="677.2" cy="212.1" r="3.6" fill="#38a800"/>
<circle cx="649.9" cy="219.2" r="3.6" fill="#ff0000"/>
<circle cx="650.2" cy="220.5" r="3.6" fill="#ff0000"/>
<circle cx="404.2" cy="248.8" r="3.6" fill="#ff0000"/>
<circle cx="400.4" cy="256.4" r="3.6" fill="#38a800"/>
<circle cx="396.3" cy="275.3" r="3.6" fill="#ff0000"/>
<circle cx="407.1" cy="281.3" r="3.6" fill="#38a800"/>
<circle cx="412.7" cy="267" r="3.6" fill="#38a800"/>
<circle cx="415.1" cy="267.6" r="3.6" fill="#ff0000"/>
<circle cx="390.2" cy="290.6" r="3.6" fill="#ff0000"/>
<circle cx="393.5" cy="289.8" r="3.6" fill="#ff0000"/>
<circle cx="401.5" cy="292.6" r="3.6" fill="#ff0000"/>
<circle cx="387" cy="297" r="3.6" fill="#ff0000"/>
<circle cx="399.1" cy="298.6" r="3.6" fill="#ff0000"/>
<circle cx="395.5" cy="295.4" r="3.6" fill="#38a800"/>
<circle cx="431.2" cy="252.8" r="3.6" fill="#ff0000"/>
<circle cx="432" cy="253.6" r="3.6" fill="#38a800"/>
<circle cx="436" cy="255.2" r="3.6" fill="#38a800"/>
<circle cx="440.8" cy="260.5" r="3.6" fill="#38a800"/>
<circle cx="456" cy="260" r="3.6" fill="#ff0000"/>
<circle cx="451.2" cy="264.1" r="3.6" fill="#38a800"/>
<circle cx="458.5" cy="264.1" r="3.6" fill="#38a800"/>
<circle cx="452.5" cy="273.2" r="3.6" fill="#38a800"/>
<circle cx="455.3" cy="274" r="3.6" fill="#ff0000"/>
<circle cx="446.1" cy="286.5" r="3.6" fill="#38a800"/>
<circle cx="474.8" cy="261.7" r="3.6" fill="#38a800"/>
<circle cx="487.4" cy="262.5" r="3.6" fill="#38a800"/>
<circle cx="489.8" cy="262.5" r="3.6" fill="#38a800"/>
<circle cx="471.8" cy="300.5" r="3.6" fill="#ff0000"/>
<circle cx="453.7" cy="317.8" r="3.6" fill="#ff0000"/>
<circle cx="472.1" cy="326.4" r="3.6" fill="#ff0000"/>
<circle cx="475.3" cy="328" r="3.6" fill="#38a800"/>
<circle cx="477.7" cy="330.7" r="3.6" fill="#ff0000"/>
<circle cx="505.1" cy="254.4" r="3.6" fill="#38a800"/>
<circle cx="505.6" cy="260.1" r="3.6" fill="#38a800"/>
<circle cx="563.1" cy="248" r="3.6" fill="#38a800"/>
<circle cx="562.3" cy="256.4" r="3.6" fill="#ff0000"/>
<circle cx="559.4" cy="269.7" r="3.6" fill="#ff0000"/>
<circle cx="563.9" cy="271.3" r="3.6" fill="#ff0000"/>
<circle cx="549.8" cy="273.7" r="3.6" fill="#38a800"/>
<circle cx="563.7" cy="291" r="3.6" fill="#ff0000"/>
<circle cx="570.6" cy="291.4" r="3.6" fill="#ff0000"/>
<circle cx="570.6" cy="293" r="3.6" fill="#ff0000"/>
<circle cx="530" cy="295" r="3.6" fill="#ff0000"/>
<circle cx="527.3" cy="295.4" r="3.6" fill="#38a800"/>
<circle cx="530.5" cy="297.5" r="3.6" fill="#38a800"/>
<circle cx="525.7" cy="301.8" r="3.6" fill="#38a800"/>
<circle cx="510.4" cy="304.2" r="3.6" fill="#ff0000"/>
<circle cx="516.1" cy="304.5" r="3.6" fill="#ff0000"/>
<circle cx="502.9" cy="306.6" r="3.6" fill="#ff0000"/>
<circle cx="546.2" cy="307.7" r="3.6" fill="#ff0000"/>
<circle cx="548.2" cy="302.6" r="3.6" fill="#38a800"/>
<circle cx="552.2" cy="306.6" r="3.6" fill="#38a800"/>
<circle cx="542.1" cy="315.8" r="3.6" fill="#38a800"/>
<circle cx="540.1" cy="318.7" r="3.6" fill="#38a800"/>
<circle cx="546.9" cy="319.5" r="3.6" fill="#ff0000"/>
<circle cx="511.2" cy="321.1" r="3.6" fill="#38a800"/>
<circle cx="513.6" cy="318.7" r="3.6" fill="#ff0000"/>
<circle cx="517.7" cy="321.9" r="3.6" fill="#ff0000"/>
<circle cx="514.1" cy="327.5" r="3.6" fill="#ff0000"/>
<circle cx="521.7" cy="326.4" r="3.6" fill="#38a800"/>
<circle cx="530.5" cy="322.7" r="3.6" fill="#ff0000"/>
<circle cx="528.9" cy="328.3" r="3.6" fill="#ff0000"/>
<circle cx="652.8" cy="264" r="3.6" fill="#38a800"/>
</g></svg>
<div class="t ml" style="left:375.5px;top:60.1px;">ney</div>
<div class="t ml" style="left:459.8px;top:74.7px;">Sokoto</div>
<div class="t ml" style="left:505.7px;top:102.6px;">Gusau</div>
<div class="t ml" style="left:564.2px;top:109.5px;">Kano</div>
<div class="t ml" style="left:538.5px;top:139.4px;">Zaria</div>
<div class="t ml" style="left:711.9px;top:114.0px;">Maiduguri</div>
<div class="t ml" style="left:606.7px;top:163.8px;">Bauchi</div>
<div class="t ml" style="left:649.1px;top:163.8px;">Gombe</div>
<div class="t ml" style="left:573.3px;top:182.6px;">Jos</div>
<div class="t ml" style="left:530.8px;top:203.6px;">Abuja</div>
<div class="t ml" style="left:719.7px;top:195.9px;">Garoua</div>
<div class="t ml" style="left:439.2px;top:222.8px;">Ilorin</div>
<div class="t ml" style="left:417.5px;top:254.8px;">Ibadan</div>
<div class="t ml" style="left:401.5px;top:288.7px;">Lagos</div>
<div class="t ml" style="left:472.6px;top:291.2px;">Benin City</div>
<div class="t ml" style="left:476.9px;top:316.6px;">Warri</div>
<div class="t ml" style="left:616.7px;top:303.6px;">Bamenda</div>
<div class="t ml" style="left:725.3px;top:259.7px;">Ngaoundere</div>
<div style="position:absolute;left:727px;top:281px;width:22px;height:40.5px;background:#333;"></div>
<div class="t" style="left:541px;top:161.5px;font-family:'Liberation Serif',serif;font-size:9.5px;letter-spacing:2.9px;color:#444;">NIGERIA</div>
<div class="t" style="left:375px;top:175.5px;font-family:'Liberation Serif',serif;font-size:8.5px;color:#444;">I N</div><div class="t" style="left:372.5px;top:184.5px;font-size:8.2px;color:#444;">u</div>
<div class="t" style="left:575px;top:247px;font-size:7.5px;font-style:italic;color:#6aa9c9;transform:rotate(-22deg);transform-origin:0 0;">Benue</div><div class="t" style="left:398px;top:268px;font-size:7px;font-style:italic;color:#6aa9c9;transform:rotate(-68deg);transform-origin:0 0;">Ogun</div>
<div class="t" style="left:375.5px;top:326px;font-size:7.5px;font-style:italic;color:#7fb0c8;letter-spacing:0.7px;">ight of</div><div class="t" style="left:377.5px;top:335px;font-size:7.5px;font-style:italic;color:#7fb0c8;letter-spacing:0.7px;">Benin</div>
<div style="position:absolute;left:577px;top:325px;width:177px;height:14px;background:rgba(255,255,255,0.6);"></div>
<div class="t" style="left:580.5px;top:327.5px;font-size:8.7px;color:#444;">Esri, USGS | Esri, HERE, Garmin, FAO,...</div>
<div style="position:absolute;left:726px;top:62px;width:23px;height:23px;background:#333;"></div>
<svg width="1012" height="623"><g fill="none" stroke="#ddd" stroke-width="0.8">
<rect x="732.5" y="68.5" width="4" height="4"/><rect x="738.5" y="68.5" width="4" height="4"/><rect x="732.5" y="74.5" width="4" height="4"/><rect x="738.5" y="74.5" width="4" height="4"/></g><g fill="#555"><path d="M733,72 L736,69.5 L736,72 Z"/><path d="M739,72 L742,69 L742,72 Z"/><path d="M733,75 L736,75 L733,78 Z"/><rect x="739" y="75" width="1" height="3"/></g>
<g stroke="#ccc" stroke-width="1.2"><line x1="733" y1="291.5" x2="743" y2="291.5"/><line x1="738" y1="287.5" x2="738" y2="295.5"/><line x1="733" y1="310.5" x2="743" y2="310.5"/></g></svg>
</div></div>
<div style="position:absolute;left:375px;top:57px;width:380px;height:283px;box-sizing:border-box;border:1px solid #3c4650;"></div>
<!--MAPEND-->

</body></html>
